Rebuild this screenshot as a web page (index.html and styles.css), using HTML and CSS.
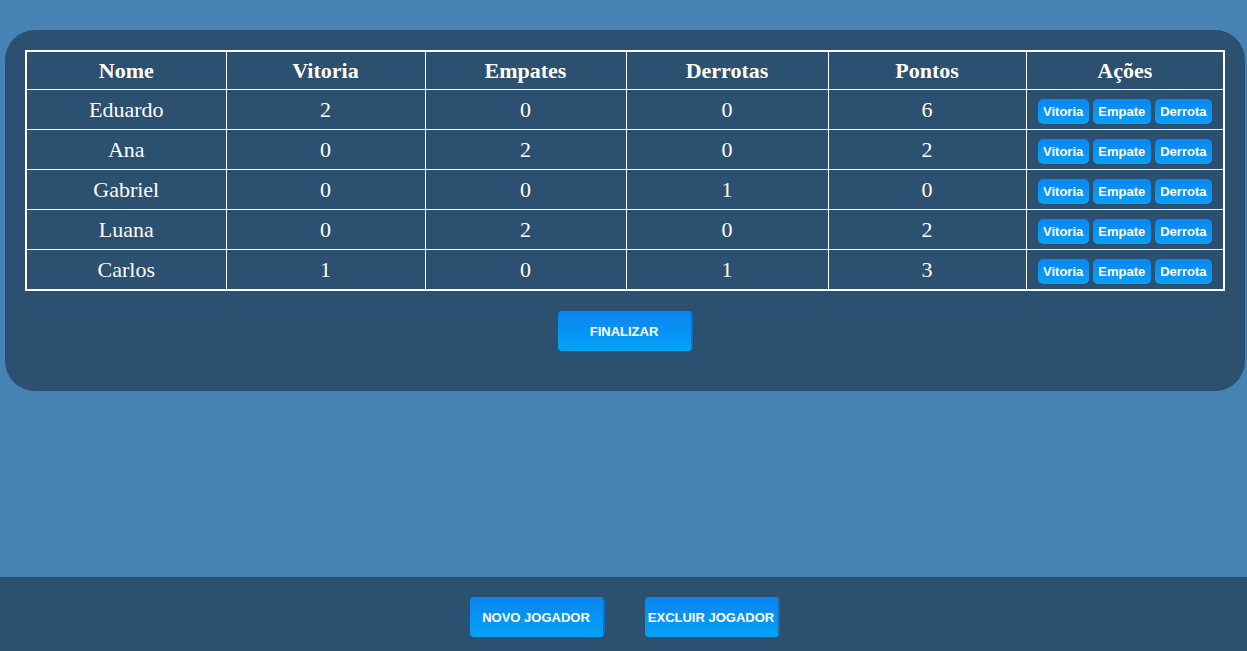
FILE: index.html
```html
<!DOCTYPE html>
<html lang="pt">
<head>
<meta charset="utf-8">
<title>Placar</title>
<link rel="stylesheet" href="styles.css">
</head>
<body>
<div class="page">
  <main class="card">
    <table class="score">
      <colgroup>
        <col class="c1"><col class="c2"><col class="c3"><col class="c4"><col class="c5"><col class="c6">
      </colgroup>
      <thead>
        <tr><th>Nome</th><th>Vitoria</th><th>Empates</th><th>Derrotas</th><th>Pontos</th><th>Ações</th></tr>
      </thead>
      <tbody>
        <tr><td>Eduardo</td><td>2</td><td>0</td><td>0</td><td>6</td><td class="acts"><div class="actions"><button class="btn-sm">Vitoria</button><button class="btn-sm">Empate</button><button class="btn-sm">Derrota</button></div></td></tr>
        <tr><td>Ana</td><td>0</td><td>2</td><td>0</td><td>2</td><td class="acts"><div class="actions"><button class="btn-sm">Vitoria</button><button class="btn-sm">Empate</button><button class="btn-sm">Derrota</button></div></td></tr>
        <tr><td>Gabriel</td><td>0</td><td>0</td><td>1</td><td>0</td><td class="acts"><div class="actions"><button class="btn-sm">Vitoria</button><button class="btn-sm">Empate</button><button class="btn-sm">Derrota</button></div></td></tr>
        <tr><td>Luana</td><td>0</td><td>2</td><td>0</td><td>2</td><td class="acts"><div class="actions"><button class="btn-sm">Vitoria</button><button class="btn-sm">Empate</button><button class="btn-sm">Derrota</button></div></td></tr>
        <tr><td>Carlos</td><td>1</td><td>0</td><td>1</td><td>3</td><td class="acts"><div class="actions"><button class="btn-sm">Vitoria</button><button class="btn-sm">Empate</button><button class="btn-sm">Derrota</button></div></td></tr>
      </tbody>
    </table>
    <div class="finish-row">
      <button class="btn btn-finish">FINALIZAR</button>
    </div>
  </main>
  <footer class="footer">
    <button class="btn btn-new">NOVO JOGADOR</button>
    <button class="btn btn-del">EXCLUIR JOGADOR</button>
  </footer>
</div>
</body>
</html>
```
FILE: styles.css
```css
html, body {
  margin: 0;
  padding: 0;
  height: 100%;
}
body {
  background: #4682b4;
  font-family: "Liberation Serif", "Times New Roman", serif;
}
.page {
  min-height: 100vh;
  display: flex;
  flex-direction: column;
}
.card {
  width: 1200px;
  margin: 30px 0 0 5px;
  padding: 20px 20px 40px;
  background: #2c5070;
  border-radius: 30px;
}
.score {
  table-layout: fixed;
  border-collapse: collapse;
  border: 2px solid #fff;
  color: #fff;
}
.c1 { width: 200px; }
.c2 { width: 199px; }
.c3 { width: 201px; }
.c4 { width: 202px; }
.c5 { width: 198px; }
.c6 { width: 198px; }
.score th, .score td {
  border: 1px solid #fff;
  height: 39px;
  padding: 0;
  text-align: center;
  font-size: 22px;
}
.score th {
  height: 37px;
  font-weight: bold;
}
.score td {
  font-weight: normal;
}
.score td.acts {
  padding-top: 3px;
  height: 36px;
}
.actions {
  display: flex;
  justify-content: center;
  gap: 4px;
}
.btn-sm {
  font-family: "Liberation Sans", Arial, sans-serif;
  font-weight: bold;
  font-size: 13px;
  color: #fff;
  border: none;
  border-radius: 5px;
  height: 25px;
  padding: 0 5.5px;
  background: linear-gradient(#0a86ef, #0aa0f6);
  cursor: pointer;
}
.finish-row {
  display: flex;
  justify-content: center;
  margin-top: 20px;
}
.btn {
  font-family: "Liberation Sans", Arial, sans-serif;
  font-weight: bold;
  font-size: 13px;
  color: #fff;
  height: 40px;
  padding: 0;
  border: none;
  border-right: 2px solid #1a6bb0;
  border-radius: 4px;
  background: linear-gradient(#0a84ef, #04a3f7);
  cursor: pointer;
}
.btn-finish {
  width: 135px;
}
.footer {
  margin-top: auto;
  height: 74px;
  box-sizing: border-box;
  padding: 20px 0 0 2px;
  background: #2c5070;
  display: flex;
  justify-content: center;
  align-items: flex-start;
  gap: 40px;
}
.btn-new,
.btn-del {
  width: 135px;
}
```
